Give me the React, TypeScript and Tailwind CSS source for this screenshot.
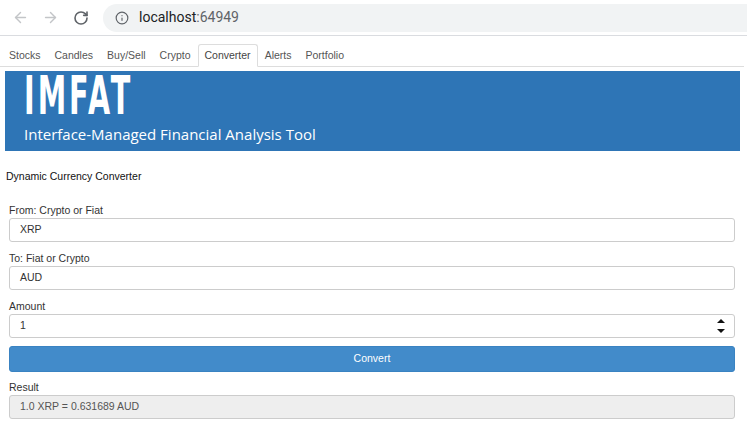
import React from 'react';
import { ArrowLeft, ArrowRight, RotateCw, Info } from 'lucide-react';

const tabs = ['Stocks', 'Candles', 'Buy/Sell', 'Crypto', 'Converter', 'Alerts', 'Portfolio'];

const Field = ({ label, value, spinner }: { label: string; value: string; spinner?: boolean }) => (
    <div className="mb-2">
        <div className="h-4 leading-4">{label}</div>
        <div className="flex h-6 items-center justify-between rounded-[3px] border border-[#cccccc] bg-white pl-[10px] pr-[9px] text-[#333]">
            <span>{value}</span>
            {spinner && (
                <svg width="8" height="16" viewBox="0 0 8 16">
                    <path d="M0 5 L4 1 L8 5 Z" fill="#111" />
                    <path d="M0 11 L4 15 L8 11 Z" fill="#111" />
                </svg>
            )}
        </div>
    </div>
);

export default function App() {
    return (
        <div className="min-h-[431px] w-[747px] bg-white font-['Liberation_Sans',Arial,sans-serif] text-[10.5px] text-[#333]">
            {/* Browser chrome */}
            <div className="flex h-[36px] items-center border-b border-[#dadce0] bg-white">
                <div className="flex w-[103px] items-center pl-[12px]">
                    <ArrowLeft size={17} strokeWidth={2} className="text-[#c3c5c8]" />
                    <ArrowRight size={17} strokeWidth={2} className="ml-[13px] text-[#c3c5c8]" />
                    <RotateCw size={16} strokeWidth={2.4} className="ml-[14px] text-[#5f6368]" />
                </div>
                <div className="flex h-[28px] flex-1 items-center rounded-l-full bg-[#f1f3f4] pl-[12px] font-['Roboto',sans-serif] text-[14px]">
                    <Info size={14} strokeWidth={2} className="text-[#5f6368]" />
                    <span className="ml-[10px] text-[#202124]">localhost</span>
                    <span className="text-[#5f6368]">:64949</span>
                </div>
            </div>

            {/* Tabs */}
            <div className="mr-[3px] flex border-b border-[#dddddd] pt-[8px] pl-[2px]">
                {tabs.map((t) => (
                    <div
                        key={t}
                        className={
                            t === 'Converter'
                                ? '-mb-px h-[23px] rounded-t-[3px] border border-b-white border-[#dddddd] bg-white px-[6px] leading-[21px] text-[#444]'
                                : 'h-[22px] px-[7px] leading-[22px] text-[#555]'
                        }
                    >
                        {t}
                    </div>
                ))}
            </div>

            {/* Banner */}
            <div className="mt-[4px] ml-[5px] mr-[7px] h-[80px] bg-[#2e75b6] pl-[19px] text-white">
                <div className="origin-left scale-x-[0.6] pt-[2px] font-['DejaVu_Sans_Condensed',sans-serif] text-[53px] font-bold leading-[46px] tracking-[5px]">
                    IMFAT
                </div>
                <div className="mt-[4px] font-['Open_Sans',sans-serif] text-[15px] leading-[22px]">
                    Interface-Managed Financial Analysis Tool
                </div>
            </div>

            <div className="mt-[17px] ml-[6px] h-4 leading-4 text-[#111]">Dynamic Currency Converter</div>

            <div className="mt-[18px] ml-[9px] mr-[12px]">
                <Field label="From: Crypto or Fiat" value="XRP" />
                <Field label="To: Fiat or Crypto" value="AUD" />
                <Field label="Amount" value="1" spinner />
                <div className="mt-[1px] flex h-[26px] items-center justify-center rounded-[3px] border border-[#3a83c2] bg-[#428bca] text-white">
                    Convert
                </div>
                <div className="mt-[7px] h-4 leading-4">Result</div>
                <div className="flex h-6 items-center rounded-[3px] border border-[#cccccc] bg-[#eeeeee] pl-[10px] text-[#555]">
                    1.0 XRP = 0.631689 AUD
                </div>
            </div>
        </div>
    );
}
